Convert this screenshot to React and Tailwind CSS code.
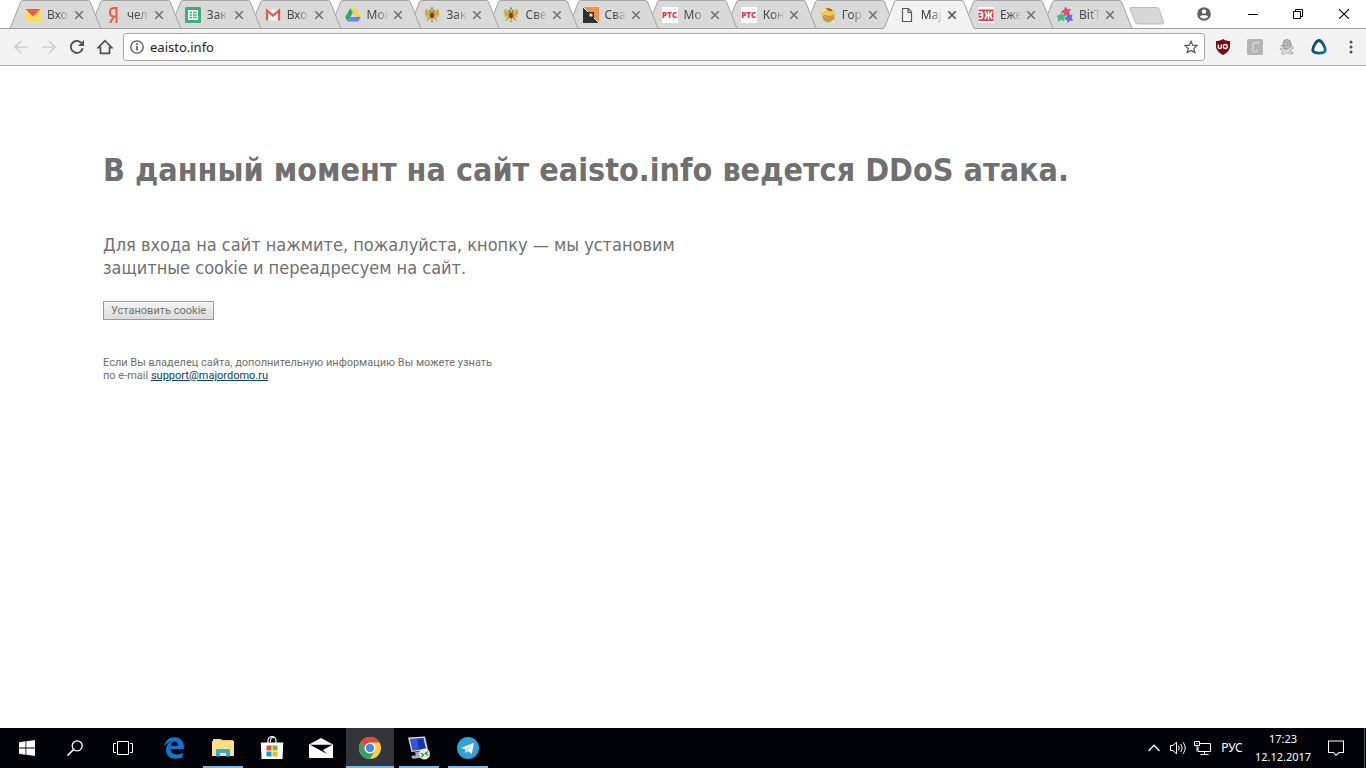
import React from "react";

/* ---------- favicons ---------- */

const YandexMail = () => (
  <svg viewBox="0 0 16 16" className="size-4">
    <path d="M0 2h16v12H0z" fill="#fbdf6b" />
    <path d="M0 14V4l8 6 8-6v10z" fill="#fddc5c" />
    <path d="M.5 2h15L8 9.500z" fill="#ef5a4c" />
  </svg>
);

const Yandex = () => (
  <svg viewBox="0 0 16 16" className="size-4">
    <path d="M11.500 0v16M12 1H9.200C6.200 1 5 3 5 5.200 5 7.800 6.500 9.500 9 9.500h2.500M8.700 9.500L5.200 16" fill="none" stroke="#ee5b4a" strokeWidth="2" />
  </svg>
);

const Sheets = () => (
  <svg viewBox="0 0 16 16" className="size-4">
    <rect width="16" height="16" rx="1" fill="#3fae78" />
    <path d="M3 3h10v10H3z" fill="#fff" />
    <path d="M4.500 5.500H7M8 5.500h3.700M4.500 8H7M8 8h3.700M4.500 10.500H7M8 10.500h3.700" stroke="#3fae78" strokeWidth="1.300" />
  </svg>
);

const Gmail = () => (
  <svg viewBox="0 0 16 16" className="size-4">
    <path d="M1 2.500h14v11H1z" fill="#f3f0ef" />
    <path d="M2 13.500v-10L8 8.500l6-5v10" fill="none" stroke="#dc5a4d" strokeWidth="2.200" />
  </svg>
);

const Drive = () => (
  <svg viewBox="0 0 16 16" className="size-4">
    <path d="M5.500 1h5l5.300 9h-5z" fill="#fbd24e" />
    <path d="M5.300 1.200L.2 10l2.500 4.500L7.900 5.600z" fill="#35a565" />
    <path d="M5.400 10h10.400l-2.600 4.500H2.800z" fill="#5b8def" />
  </svg>
);

const Eagle = () => (
  <svg viewBox="0 0 16 16" className="size-4">
    <path d="M6 6L5 3.500 2.500 1.500.8 3 .5 7l1 3 2.500 2L6 10.500zM10 6l1-2.500 2.500-2L15.200 3l.3 4-1 3-2.500 2-2-1.500z" fill="#d6c45e" />
    <path d="M2.200 3.500v4M3.700 4.500v4.500M12.300 4.500v4.500M13.800 3.500v4" stroke="#a18f3e" strokeWidth=".7" />
    <path d="M6.800 .5h2.400L8.800 2.500H7.200zM5 2.800l2.400.2.300 2.700h.6l.3-2.700 2.400-.2L9.800 6H6.200z" fill="#93803a" />
    <path d="M5.500 5.800h5v4.500L8 12l-2.500-1.700z" fill="#a0682f" />
    <path d="M6.500 6.500h3v3.300L8 11 6.500 9.800z" fill="#8f3028" />
    <path d="M5.800 11L3 13.500M10.200 11l2.800 2.500M8 12v3M6.500 14.500h3" stroke="#b19d4c" strokeWidth="1.200" />
    <path d="M1.500 13.500h2M12.500 13.500h2" stroke="#d6c470" />
  </svg>
);

const Square = () => (
  <svg viewBox="0 0 16 16" className="size-4">
    <path d="M0 0h16v16H0z" fill="#2f3033" />
    <path d="M0 0h16v16z" fill="#f0924c" />
    <path d="M0 0l16 16" stroke="#fff" strokeWidth="1" />
    <path d="M5 5h6v6H5z" fill="#3b2d2a" />
    <path d="M6.500 6.500h3v3h-3z" fill="#e6e2e0" />
  </svg>
);

const Rts = () => (
  <span className="flex size-4 items-center justify-center bg-white font-['Open_Sans',sans-serif] text-[8px] font-extrabold leading-none text-[#e0384e]">РТС</span>
);

const Muffin = () => (
  <svg viewBox="0 0 16 16" className="size-4">
    <path d="M1.200 6L3.200 12c1.500 3.500 5 3.800 7.800 2.500L14.300 12l.9-5z" fill="#d9a83f" />
    <path d="M3 9.500l1.500 3.700M5.500 10.500l1 4M8.500 11l.3 4M11.200 10.500v3.500M13.500 9.500l-.6 3" stroke="#a9742a" strokeWidth=".7" />
    <path d="M.5 6C0 3.500 2 1.800 4 1.300 7 .3 9.500 .8 12 2.500c2.300 1.300 3.800 3 3.500 5C14.500 9.500 11.500 10 9 9.800 5 9.800 1.500 9 .5 6z" fill="#ecc75f" />
    <path d="M2 5.200C3.300 3 5.200 2.200 7 2.300" stroke="#f9e9ae" strokeWidth="1.600" fill="none" />
    <path d="M6 1.200C8 .3 11.500 1.500 12.300 3.500 11.500 5 7 4 6 1.200z" fill="#a8642c" />
    <path d="M3.500 8c3 1.500 7.500 2 10.500.5" stroke="#b88130" strokeWidth=".9" fill="none" />
  </svg>
);

const PageIcon = () => (
  <svg viewBox="0 0 16 16" className="size-4">
    <path d="M3.500 1.500h6l3 3.500v9.500h-9zM9 1.500v4h3.500" fill="none" stroke="#5a5a5a" strokeWidth="1.200" />
  </svg>
);

const Ezh = () => (
  <svg viewBox="0 0 16 16" className="size-4">
    <path d="M0 0h16v16H0z" fill="#fff" />
    <path d="M.5 2.500h15v11.500H.5z" fill="#dc3f45" />
    <path d="M0 5h3.500l1 1.200v4.100l-1 1.200H0M1.500 8.200h3M10.500 4v8.500M7 4.300l1.700 3.900h3.600L14 4.300M7 12.200l1.700-4M14 12.200l-1.700-4" fill="none" stroke="#fff" strokeWidth="1.700" />
  </svg>
);

const Stars = () => (
  <svg viewBox="0 0 16 16" className="size-4">
    <path d="M8.500 0l1.700 2.500 3.300-.2-1.800 2.800 1.300 3-3.300-.8L7.200 9.500 7 6.200 4.300 4.600l3-1.300z" fill="#e34d6c" stroke="#e34d6c" strokeWidth=".8" />
    <path d="M4 5.800l1.500 2.400 3 .2L6.300 10.700l.8 3-3.100-1.200L1.200 14.300l.2-3.100L0 9l3.100-.6z" fill="#3fbf77" stroke="#3fbf77" strokeWidth=".8" />
    <path d="M10.500 6.800l1.700 1.900 3-.6-1.100 2.900 1.600 2.400-3-.2L11 15.500l-.8-2.700-2.800-1.200 2.500-1.700z" fill="#5b6fd8" stroke="#5b6fd8" strokeWidth=".8" />
  </svg>
);

const tabs = [
  { title: "Вхо", icon: YandexMail, wide: true },
  { title: "чел", icon: Yandex, wide: true },
  { title: "Зак", icon: Sheets, wide: true },
  { title: "Вхо", icon: Gmail, wide: true },
  { title: "Мой", icon: Drive, wide: true },
  { title: "Зак", icon: Eagle },
  { title: "Све", icon: Eagle },
  { title: "Сва", icon: Square },
  { title: "Мо", icon: Rts },
  { title: "Кон", icon: Rts },
  { title: "Гор", icon: Muffin },
  { title: "Maj", icon: PageIcon, active: true },
  { title: "Еже", icon: Ezh },
  { title: "BitT", icon: Stars },
];

function Tab({ tab, order }) {
  const Icon = tab.icon;
  const fill = tab.active ? "#f2f2f2" : "#d9d9d9";
  return (
    <div className={`relative flex h-[29px] min-w-0 items-center pl-4 pt-px ${tab.wide ? "flex-[80]" : "flex-[79]"}`} style={{ zIndex: order }}>
      <svg viewBox="0 0 92 29" preserveAspectRatio="none" className="absolute top-0 left-0 h-[29px] w-[calc(100%+13px)]" aria-hidden="true">
        <path d="M0 29L1.500 27.500 11.500 2Q12.300 .5 14 .5H78Q79.700 .5 80.500 2L90.500 27.500 92 29z" fill={fill} />
        <path d="M0 28.500L1.500 27.500 11.500 2Q12.300 .5 14 .5H78Q79.700 .5 80.500 2L90.500 27.500 92 28.500" fill="none" stroke="#a6a6a6" />
        {!tab.active && <path d="M0 28.500h92" stroke="#a0a0a0" />}
      </svg>
      <button role="tab" aria-selected={!!tab.active} className="relative flex min-w-0 flex-1 items-center gap-[6px]">
        <span className="shrink-0"><Icon /></span>
        <span className={`min-w-0 flex-1 overflow-hidden text-left text-xs leading-4 whitespace-nowrap [mask-image:linear-gradient(to_right,black_40%,transparent_90%)] ${tab.active ? "text-[#333]" : "text-[#4a4a4a]"}`}>{tab.title}</span>
      </button>
      <button aria-label="Закрыть вкладку" className="relative mr-[3px] flex size-[14px] shrink-0 items-center justify-center">
        <svg viewBox="0 0 10 10" className="size-[10px]"><path d="M1.300 1.300l7.400 7.400M8.700 1.300L1.300 8.700" stroke={tab.active ? "#505050" : "#737373"} strokeWidth="1.600" /></svg>
      </button>
    </div>
  );
}

function TabStrip() {
  return (
    <div className="flex h-[29px] items-start border-b border-[#a0a0a0] bg-white pl-[9px]">
      <div role="tablist" className="flex min-w-0 flex-1">
        {tabs.map((t, i) => <Tab key={i} tab={t} order={t.active ? 30 : tabs.length - i} />)}
      </div>
      <button aria-label="Новая вкладка" className="mt-[7px] ml-[9px] h-[18px] w-9">
        <svg viewBox="0 0 36 18" className="h-[18px] w-9"><path d="M2 .5h25.500q2 0 2.800 1.800L34.500 15q.6 2-1.500 2H9q-2 0-2.800-2L1 2Q.5 .5 2 .5z" fill="#d6d6d6" stroke="#bcbcbc" /></svg>
      </button>
      <div className="flex w-[201px] shrink-0 items-center justify-end">
        <button aria-label="Профиль" className="mr-[13px] flex h-[27px] w-[26px] items-center justify-center">
          <svg viewBox="0 0 14 14" className="size-[14px]"><circle cx="7" cy="7" r="6.800" fill="#5f6062" /><circle cx="7" cy="4.600" r="2.200" fill="#fff" /><path d="M2.800 9.600C4 7.700 10 7.700 11.200 9.600 9.500 12.300 4.500 12.300 2.800 9.600z" fill="#fff" /></svg>
        </button>
        <button aria-label="Свернуть" className="flex h-[27px] w-[45px] items-center justify-center">
          <svg viewBox="0 0 10 10" className="size-[10px]"><path d="M0 5.500h10" stroke="#000" /></svg>
        </button>
        <button aria-label="Свернуть в окно" className="flex h-[27px] w-[46px] items-center justify-center">
          <svg viewBox="0 0 10 10" className="size-[10px]"><path d="M.5 2.500h7v7h-7zM2.500 2.500v-2h7v7h-2" fill="none" stroke="#000" /></svg>
        </button>
        <button aria-label="Закрыть" className="flex h-[27px] w-[45px] items-center justify-center">
          <svg viewBox="0 0 10 10" className="size-[10px]"><path d="M0 0l10 10M10 0L0 10" stroke="#000" strokeWidth="1.100" /></svg>
        </button>
      </div>
    </div>
  );
}

function Toolbar() {
  return (
    <div className="flex h-[37px] items-center border-b border-[#acacac] bg-[#f2f2f2] pl-[7px]">
      <button aria-label="Назад" className="flex size-7 items-center justify-center">
        <svg viewBox="0 0 14 14" className="size-[14px]"><path d="M14 7H1.500M7 1L1 7l6 6" fill="none" stroke="#cfcfcf" strokeWidth="1.700" /></svg>
      </button>
      <button aria-label="Вперёд" className="flex size-7 items-center justify-center">
        <svg viewBox="0 0 14 14" className="size-[14px]"><path d="M0 7h12.500M7 1l6 6-6 6" fill="none" stroke="#cfcfcf" strokeWidth="1.700" /></svg>
      </button>
      <button aria-label="Обновить" className="flex size-7 items-center justify-center">
        <svg viewBox="0 0 14 14" className="size-[14px]"><path d="M12.700 8.200A6 6 0 1 1 11.200 2.800" fill="none" stroke="#505050" strokeWidth="1.900" /><path d="M14 0v6H8z" fill="#505050" /></svg>
      </button>
      <button aria-label="Главная" className="flex size-7 items-center justify-center">
        <svg viewBox="0 0 16 16" className="size-4"><path d="M1.200 8.700L8 1.700l6.800 7h-2.300v5.700h-9V8.700z" fill="none" stroke="#505050" strokeWidth="1.700" /></svg>
      </button>
      <div className="ml-1 flex h-7 min-w-0 flex-1 items-center rounded-[3px] border border-[#a9a9a9] bg-white px-[6px]">
        <svg viewBox="0 0 14 14" className="size-[14px] shrink-0" aria-hidden="true"><circle cx="7" cy="7" r="6.200" fill="none" stroke="#505050" strokeWidth="1.300" /><path d="M7 6v4.500M7 3.300v1.600" stroke="#505050" strokeWidth="1.600" /></svg>
        <input aria-label="Адресная строка" defaultValue="eaisto.info" className="ml-[6px] h-6 min-w-0 flex-1 bg-transparent text-[13px] text-[#222] outline-none" />
        <button aria-label="Добавить в закладки">
          <svg viewBox="0 0 14 14" className="size-[14px]"><path d="M7 1.300l1.700 3.900 4.300.4-3.200 2.800 1 4.200L7 10.400l-3.800 2.200 1-4.200L1 5.600l4.300-.4z" fill="none" stroke="#505050" strokeWidth="1.200" /></svg>
        </button>
      </div>
      <div className="ml-[10px] flex items-center gap-4">
        <button aria-label="uBlock Origin">
          <svg viewBox="0 0 16 16" className="size-4"><path d="M8 0c2 1.500 4.500 2 7 2v5c0 4-3 7-7 9-4-2-7-5-7-9V2c2.500 0 5-.5 7-2z" fill="#7e0710" /><path d="M3.300 5.500v2.700c0 1.700 3 1.700 3 0V5.500M6.300 5.500v4" fill="none" stroke="#fff" strokeWidth="1.300" /><circle cx="10.300" cy="7.500" r="2" fill="none" stroke="#fff" strokeWidth="1.300" /></svg>
        </button>
        <button aria-label="Расширение C">
          <svg viewBox="0 0 16 16" className="size-4"><rect width="16" height="16" rx="1.500" fill="#b4b4b4" /><path d="M11.200 5L11 3.500H8Q6.800 3.500 6.500 5L5.500 11Q5.300 12.500 6.500 12.500H9.800l.4-1.500" fill="none" stroke="#d6d6d6" strokeWidth="1.700" /></svg>
        </button>
        <button aria-label="Расширение">
          <svg viewBox="0 0 16 16" className="size-4"><path d="M4 7.500V4.300a4 3.800 0 0 1 8 0V7.500L10 10H6z" fill="#bdbdbd" stroke="#9b9b9b" /><path d="M1.500 6.800L13 5.500M5.500 3.500h5" stroke="#a4a4a4" strokeWidth="1.200" /><path d="M.8 10l2.700-1 3.500 1.800L13 7l1.800 1.800-4 3 3.400 2-1.200 1.500-4.500-1.600L4 15.500 2.300 14l2.200-1.500z" fill="#dedede" stroke="#9a9a9a" strokeWidth=".8" /></svg>
        </button>
        <button aria-label="Расширение Aqua">
          <svg viewBox="0 0 16 16" className="size-4"><defs><linearGradient id="tri" x1="0" y1="0" x2="1" y2="1"><stop offset="0" stopColor="#164568" /><stop offset=".7" stopColor="#11567f" /><stop offset="1" stopColor="#1583b0" /></linearGradient></defs><path d="M8 1.500c2.700 0 6.300 6.500 6.300 9.800 0 3.700-12.600 3.700-12.600 0C1.700 8 5.300 1.500 8 1.500z" fill="#fff" stroke="url(#tri)" strokeWidth="2.800" /></svg>
        </button>
      </div>
      <button aria-label="Меню" className="mx-[6px] ml-[14px] flex h-7 w-[19px] items-center justify-center">
        <svg viewBox="0 0 4 14" className="h-[14px] w-1"><circle cx="2" cy="2" r="1.500" fill="#505050" /><circle cx="2" cy="7" r="1.500" fill="#505050" /><circle cx="2" cy="12" r="1.500" fill="#505050" /></svg>
      </button>
    </div>
  );
}

/* ---------- taskbar ---------- */

const WinLogo = () => (
  <svg viewBox="0 0 16 16" className="size-4"><path d="M0 2.200L6.500 1.300v6.200H0zM7.300 1.200L16 0v7.500H7.300zM0 8.400h6.500v6.300L0 13.800zM7.300 8.400H16V16l-8.700-1.200z" fill="#fff" /></svg>
);
const Search = () => (
  <svg viewBox="0 0 16 16" className="size-4"><circle cx="10.200" cy="5.800" r="5" fill="none" stroke="#fff" strokeWidth="1.300" /><path d="M6.700 9.400L.4 15.700" stroke="#fff" strokeWidth="1.500" /></svg>
);
const TaskView = () => (
  <svg viewBox="0 0 20 14" className="h-[14px] w-5"><path d="M4.500 .5h11v13h-11zM3 2.500H.5v9H3M17 2.500h2.500v9H17" fill="none" stroke="#fff" /></svg>
);
const Edge = () => (
  <svg viewBox="0 0 20 22" className="h-[22px] w-5"><path d="M.2 9.700C1.200 3.500 5.200 .3 10.500 .3c5.700 0 9.300 4 9.300 9.200v2.600H6.400c.2 4 3.200 5.300 6.300 5.300 2.400 0 4.300-.6 6-1.600v4.300c-2 1.200-4.500 1.700-7.200 1.700C5.500 21.800 2 18 2 13c0-4 2-7 5.500-8.800C4.500 5 2 7 .2 9.700zM6.600 8.700h7.700c0-2.800-1.500-4.200-3.700-4.200-2.100 0-3.600 1.700-4 4.200z" fill="#0b78d4" /></svg>
);
const Explorer = () => (
  <svg viewBox="0 0 22 20" className="h-5 w-[22px]"><path d="M1 1h8l1.500 1H21v16H1z" fill="#e9c463" /><path d="M0 3h22V18H0z" fill="#fbe08a" /><path d="M2 2.200h6" stroke="#fff3c4" /><path d="M4 18.500v-6.200Q4 11 5.500 11h11q1.500 0 1.500 1.300v6.200h-4V15H8v3.500z" fill="#35a9cf" /></svg>
);
const Store = () => (
  <svg viewBox="0 0 24 24" className="size-6"><path d="M8 7V4.500a4 4 0 0 1 8 0V7M10.500 6V4a3 3 0 0 1 4-2.500" fill="none" stroke="#fff" strokeWidth="1.200" /><path d="M.8 6.500h22.500L22.500 23h-21z" fill="#fff" /><path d="M6.500 9.500h5v5h-5z" fill="#e35425" /><path d="M12.500 9.500h5v5h-5z" fill="#7fb92b" /><path d="M6.500 15.500h5v5h-5z" fill="#0e9ed8" /><path d="M12.500 15.500h5v5h-5z" fill="#f6b71c" /></svg>
);
const Mail = () => (
  <svg viewBox="0 0 24 20" className="h-5 w-6"><path d="M0 6.500L12 0l12 6.500V20H0z" fill="#fff" /><path d="M1 6.800h22.500L14 12l4 4z" fill="#02040a" /></svg>
);
const Chrome = () => (
  <svg viewBox="0 0 22 22" className="size-[22px]"><circle cx="11" cy="11" r="11" fill="#ffd046" /><path d="M1.470 5.500A11 11 0 0 1 20.530 5.500H11L6.240 13.750z" fill="#e04a3a" /><path d="M1.470 5.500A11 11 0 0 0 11 22l4.760-8.250H6.240z" fill="#2ba55d" /><circle cx="11" cy="11" r="5.500" fill="#fff" /><circle cx="11" cy="11" r="4.200" fill="#4688f1" /></svg>
);
const Remote = () => (
  <svg viewBox="0 0 24 24" className="size-6"><path d="M1 1.500l17-1 3 13.500-16.500 2z" fill="#d4dbe6" /><path d="M3 3l13.500-1 2.500 11-13.500 1.500z" fill="#1734b5" /><path d="M3 3l7-.5 2 11.300-6.500.7z" fill="#5970dc" opacity=".55" /><path d="M8 16l5-.5 1 4-5 1zM4 20l11-1.500v3L6 23z" fill="#a6adb9" /><circle cx="17.500" cy="18" r="5.500" fill="#e8ece8" /><path d="M14 17l2.500 1.800-2 2.200M21 15.500L18.500 17.300l2.500 2" fill="none" stroke="#459148" strokeWidth="1.500" /></svg>
);
const Telegram = () => (
  <svg viewBox="0 0 22 22" className="size-[22px]"><circle cx="11" cy="11" r="11" fill="#2fa3d7" /><path d="M4 11l13-5.300-2.300 11.300-4-3-2 2-.7-4z" fill="#fff" /><path d="M8 12l7-5-4.300 6.700L8.700 16z" fill="#c6dfed" /></svg>
);

const apps = [
  { name: "Microsoft Edge", icon: Edge },
  { name: "Проводник", icon: Explorer, running: true },
  { name: "Магазин", icon: Store },
  { name: "Почта", icon: Mail },
  { name: "Google Chrome", icon: Chrome, running: true, active: true },
  { name: "Удалённый рабочий стол", icon: Remote, running: true },
  { name: "Telegram", icon: Telegram, running: true },
];

function TaskButton({ app }) {
  const Icon = app.icon;
  return (
    <button aria-label={app.name} className={`relative flex h-10 w-12 items-center justify-center ${app.active ? "bg-[#323539]" : ""}`}>
      <Icon />
      {app.running && <span className={`absolute bottom-0 h-[2px] bg-[#76b9ed] ${app.active ? "inset-x-0" : "inset-x-1"}`} />}
    </button>
  );
}

function Taskbar() {
  return (
    <footer className="flex h-10 items-center bg-[#010308] pl-[3px] text-white">
      <div className="mr-[3px] flex">
        <TaskButton app={{ name: "Пуск", icon: WinLogo }} />
        <TaskButton app={{ name: "Поиск", icon: Search }} />
        <TaskButton app={{ name: "Представление задач", icon: TaskView }} />
      </div>
      <div className="flex flex-1 gap-px">
        {apps.map((a) => <TaskButton key={a.name} app={a} />)}
      </div>
      <button aria-label="Скрытые значки" className="flex h-10 w-6 items-center justify-center">
        <svg viewBox="0 0 12 8" className="h-2 w-3"><path d="M.5 7L6 1.300 11.500 7" fill="none" stroke="#fff" strokeWidth="1.300" /></svg>
      </button>
      <button aria-label="Громкость" className="flex h-10 w-6 items-center justify-center">
        <svg viewBox="0 0 17 14" className="h-[14px] w-[17px]"><path d="M.5 4.500H3L6.500 1.200v11.600L3 9.500H.5z" fill="none" stroke="#fff" /><path d="M8.500 4.800q1.500 2.200 0 4.400M10.800 3q3 4 0 8M13 1.200q4.500 5.800 0 11.600" fill="none" stroke="#fff" /></svg>
      </button>
      <button aria-label="Сеть" className="flex h-10 w-6 items-center justify-center">
        <svg viewBox="0 0 17 14" className="h-[14px] w-[17px]"><path d="M6 2.500h10.500v8H4V6M10.500 10.500v3M6.500 13.500h8M.5 .5h5v4h-5zM2.500 2.500h1M3 4.500v6" fill="none" stroke="#fff" /></svg>
      </button>
      <button className="w-9 text-center text-xs">РУС</button>
      <button className="w-[66px] text-center text-[11px] leading-[18px]"><span className="block">17:23</span><span className="block">12.12.2017</span></button>
      <button aria-label="Центр уведомлений" className="flex h-10 w-10 items-center justify-center">
        <svg viewBox="0 0 16 16" className="size-4"><path d="M.5 1h15v11.500h-4.500L8 15.300l-2.500-2.800h-5z" fill="none" stroke="#fff" strokeWidth="1.100" /></svg>
      </button>
      <div className="ml-2 h-10 w-[2px] border-l border-[#4c4f54]" />
    </footer>
  );
}

export default function App() {
  return (
    <div className="flex min-h-screen flex-col bg-white font-['Noto_Sans',sans-serif]">
      <header>
        <TabStrip />
        <Toolbar />
      </header>
      <main className="flex-1 px-[103px] pt-[84px] text-[#707070]">
        <h1 className="font-['DejaVu_Sans_Condensed','DejaVu_Sans',sans-serif] text-[32px] leading-10 font-bold">В данный момент на сайт eaisto.info ведется DDoS атака.</h1>
        <p className="mt-[43px] font-['DejaVu_Sans_Condensed','DejaVu_Sans',sans-serif] text-lg leading-[23px]">Для входа на сайт нажмите, пожалуйста, кнопку — мы установим<br />защитные cookie и переадресуем на сайт.</p>
        <button className="mt-[22px] block h-[19px] border border-[#9a9a9a] bg-linear-to-b from-[#f4f4f4] to-[#dcdcdc] px-[7px] font-['Roboto',sans-serif] text-[11px] leading-4">Установить cookie</button>
        <p className="mt-9 font-['Roboto',sans-serif] text-[11px] leading-[13px]">Если Вы владелец сайта, дополнительную информацию Вы можете узнать<br />по e-mail <a href="mailto:support@majordomo.ru" className="text-[#0b4166] underline">support@majordomo.ru</a></p>
      </main>
      <Taskbar />
    </div>
  );
}
